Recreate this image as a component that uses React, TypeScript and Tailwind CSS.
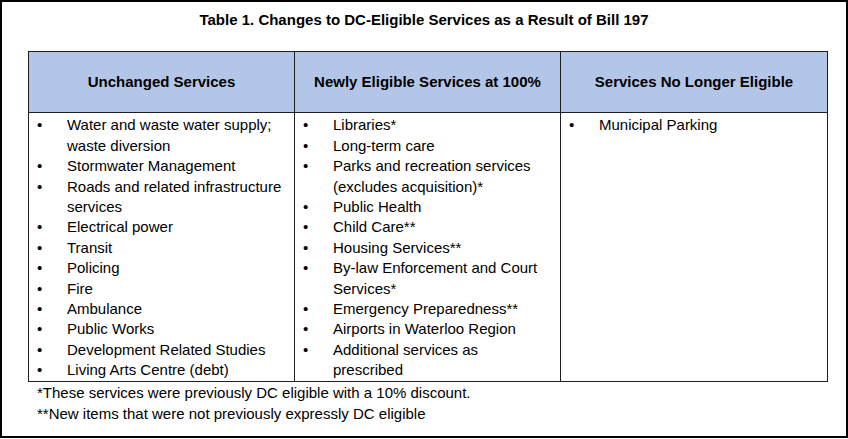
const unchanged = [
  "Water and waste water supply; waste diversion",
  "Stormwater Management",
  "Roads and related infrastructure services",
  "Electrical power",
  "Transit",
  "Policing",
  "Fire",
  "Ambulance",
  "Public Works",
  "Development Related Studies",
  "Living Arts Centre (debt)",
];

const newlyEligible = [
  "Libraries*",
  "Long-term care",
  "Parks and recreation services (excludes acquisition)*",
  "Public Health",
  "Child Care**",
  "Housing Services**",
  "By-law Enforcement and Court Services*",
  "Emergency Preparedness**",
  "Airports in Waterloo Region",
  "Additional services as prescribed",
];

const noLonger = ["Municipal Parking"];

function BulletList({ items }: { items: string[] }) {
  return (
    <ul className="pl-[8px] pr-[11px] pt-[2px]">
      {items.map((item) => (
        <li key={item} className="flex">
          <span className="w-[30px] shrink-0">•</span>
          <span>{item}</span>
        </li>
      ))}
    </ul>
  );
}

export default function App() {
  return (
    <div
      className="w-[848px] h-[438px] border-2 border-black bg-white text-black text-[15px] leading-[20.4px]"
      style={{ fontFamily: '"Liberation Sans", Arial, sans-serif' }}
    >
      <h1 className="pt-[8px] text-center font-bold">
        Table 1. Changes to DC-Eligible Services as a Result of Bill 197
      </h1>
      <div className="ml-[26px] mt-[21px] w-[800px] border border-[#1e1e1e]">
        <div className="grid grid-cols-3 bg-[#b4c6e7] border-b border-[#1e1e1e] font-bold">
          <div className="h-[60px] flex items-center justify-center border-r border-[#1e1e1e]">
            Unchanged Services
          </div>
          <div className="h-[60px] flex items-center justify-center border-r border-[#1e1e1e]">
            Newly Eligible Services at 100%
          </div>
          <div className="h-[60px] flex items-center justify-center">
            Services No Longer Eligible
          </div>
        </div>
        <div className="grid grid-cols-3 h-[268px]">
          <div className="border-r border-[#1e1e1e]">
            <BulletList items={unchanged} />
          </div>
          <div className="border-r border-[#1e1e1e]">
            <BulletList items={newlyEligible} />
          </div>
          <div>
            <BulletList items={noLonger} />
          </div>
        </div>
      </div>
      <div className="ml-[35px] mt-[1px]">
        <p>*These services were previously DC eligible with a 10% discount.</p>
        <p>**New items that were not previously expressly DC eligible</p>
      </div>
    </div>
  );
}
